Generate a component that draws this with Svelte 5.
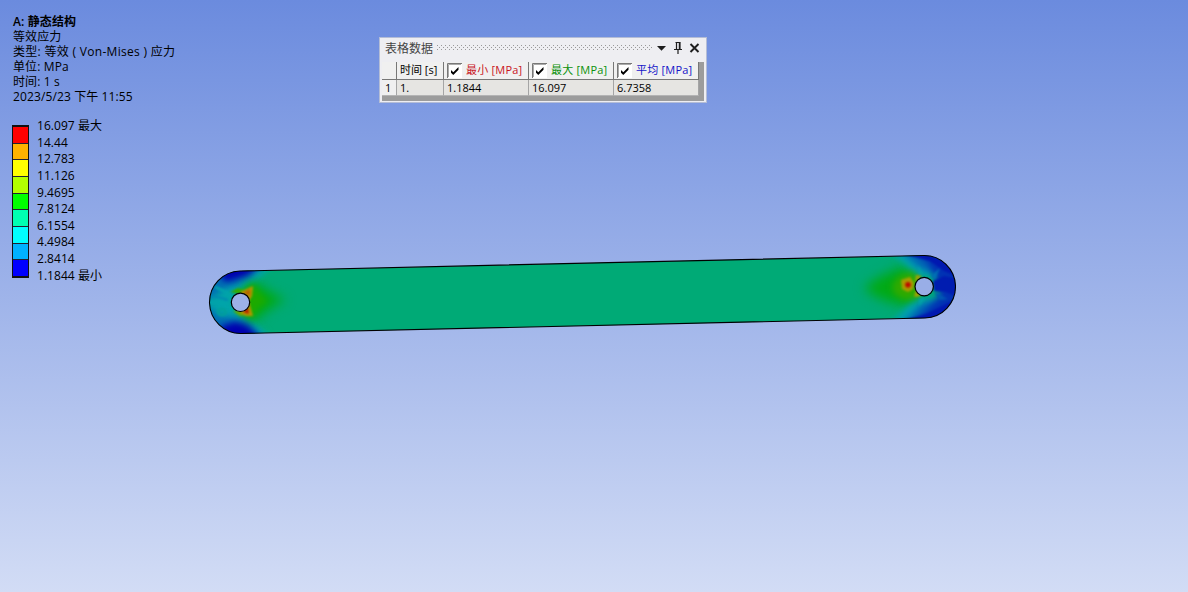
<script>
  const info = [
    { text: 'A: 静态结构', bold: true },
    { text: '等效应力' },
    { text: '类型: 等效 ( Von-Mises ) 应力', wide: true },
    { text: '单位: MPa' },
    { text: '时间: 1 s' },
    { text: '2023/5/23 下午 11:55' }
  ];
  const labels = ['16.097 最大', '14.44', '12.783', '11.126', '9.4695', '7.8124', '6.1554', '4.4984', '2.8414', '1.1844 最小'];
  const bands = ['#ff0000', '#ffb200', '#ffff00', '#b2ff00', '#00ff00', '#00ffb2', '#00ffff', '#00b2ff', '#0000ff'];
  const columns = [
    { name: '最小 [MPa]', color: '#c8141e', value: '1.1844' },
    { name: '最大 [MPa]', color: '#0a910a', value: '16.097' },
    { name: '平均 [MPa]', color: '#1414c8', value: '6.7358' }
  ];
  const outline = 'M240 271 L923.5 255.5 A31.2 31.2 0 0 1 925 318 L241.5 333.5 A31.2 31.2 0 0 1 240 271Z';
</script>

<main class="viewport">
  <section class="info">
    {#each info as line}
      <div class:bold={line.bold} class:wide={line.wide}>{line.text}</div>
    {/each}
  </section>

  <section class="legend">
    <div class="scale">
      {#each bands as band}
        <i style="background:{band}"></i>
      {/each}
    </div>
    <div class="labels">
      {#each labels as label}
        <span>{label}</span>
      {/each}
    </div>
  </section>

  <svg class="model" width="1188" height="592" viewBox="0 0 1188 592">
    <defs>
      <clipPath id="link"><path d={outline} /></clipPath>
      <filter id="b1" color-interpolation-filters="sRGB" x="-60%" y="-60%" width="220%" height="220%"><feGaussianBlur stdDeviation="1.3" /></filter>
      <filter id="b3" color-interpolation-filters="sRGB" x="-60%" y="-60%" width="220%" height="220%"><feGaussianBlur stdDeviation="3" /></filter>
      <filter id="b6" color-interpolation-filters="sRGB" x="-60%" y="-60%" width="220%" height="220%"><feGaussianBlur stdDeviation="6" /></filter>
    </defs>
    <g clip-path="url(#link)">
      <rect x="205" y="250" width="755" height="90" fill="#00aa76" />

      <path d="M200 255 H282 L258 280 L238 291 L232 302 L239 315 L257 325 L280 345 H200Z" fill="#00a4aa" filter="url(#b3)" />
      <g filter="url(#b3)">
        <path d="M200 292 V258 H268 L251 277 L237 285 L226 288 L216 294 L212 298 L202 298Z" fill="#006eb4" />
        <path d="M200 306 L211 308 L218 315 L232 317 L248 320 L268 345 H200Z" fill="#006eb4" />
      </g>
      <g filter="url(#b3)">
        <path d="M220 276 L228 260 H264 L248 275 L236 279 L226 282Z" fill="#0000b0" />
        <path d="M220 343 L221 326 L235 322 L247 325 L264 343Z" fill="#0000b0" />
      </g>
      <g filter="url(#b1)" fill="none" stroke="#00a4aa" stroke-width="2.5">
        <path d="M210 302 H230" />
        <path d="M215 287 L230 294" stroke-width="3" />
        <ellipse cx="222" cy="312" rx="4" ry="3" stroke="#00a09a" />
        <path d="M214 296 L228 300" stroke="#0088b0" stroke-width="2" />
      </g>
      <path d="M246 284 L257 283 Q268 292 286 300 Q267 308 258 319 L246 320Z" fill="#00aa14" filter="url(#b6)" />
      <path d="M242 291 L254 284 L259 292 L268 301 L258 309 L252 319 L242 313Z" fill="#1caa00" filter="url(#b3)" />
      <g filter="url(#b1)">
        <path d="M230 292 L238 288 L247 291 L240 294Z" fill="#32aa00" />
        <path d="M233 311 L240 316 L246 315 L240 310Z" fill="#64a800" />
        <path d="M240 292 L253 286 L252 296 L249 301Z" fill="#b49600" />
        <path d="M243 293 L250 289 L250 296Z" fill="#b46400" />
        <path d="M240 313 L249 302 L253 316 L246 316Z" fill="#b49600" />
        <path d="M243 312 L248 307 L249 314Z" fill="#b41e00" />
      </g>

      <path d="M906 266 Q880 274 864 288 Q878 302 909 306 L918 288Z" fill="#00aa14" filter="url(#b6)" />
      <g filter="url(#b3)">
        <path d="M882 245 L908 266 L920 276 L937 277 L939 297 L922 299 L908 306 L885 329 H968 V245Z" fill="#00a0b0" />
        <path d="M894 245 L920 268 L937 275 L939 298 L921 304 L898 329 H968 V245Z" fill="#0064b4" />
        <path d="M910 245 L928 263 L936 280 L941 294 L929 307 L908 329 H968 V245Z" fill="#0032b4" />
      </g>
      <g filter="url(#b1)">
        <path d="M933 281 L944 276 L960 279 V298 L946 292 L934 291Z" fill="#001cb0" />
        <path d="M900 253 H924 L947 262 L960 278 L944 271 L930 261Z" fill="#0018b0" />
        <path d="M960 297 L940 307 L926 314 L905 320 H934 L954 312Z" fill="#0018b0" />
        <path d="M934 292 L948 299 L940 300Z" fill="#0058b4" />
        <path d="M931 276 L940 268 L935 280Z" fill="#0070b4" />
        <path d="M919 275 L918 265 L924 276Z" fill="#00a0aa" />
        <path d="M919 298 L919 306 L926 298Z" fill="#00a0aa" />
      </g>
      <path d="M899 276 L912 272 L920 279 L918 297 L905 300 L894 294 L892 285Z" fill="#30aa00" filter="url(#b3)" />
      <g filter="url(#b1)">
        <path d="M901 280 L910 277 L914 283 L913 289 L908 292 L902 289Z" fill="#a89c00" />
        <path d="M914 297 L916 290 L921 296Z" fill="#a8a000" />
        <path d="M915 282 L916 275 L922 276Z" fill="#a8a000" />
        <circle cx="908" cy="284.8" r="2.8" fill="#c00800" />
      </g>
    </g>
    <path d={outline} fill="none" stroke="#000" stroke-width="1.1" />
    <circle cx="240.5" cy="302.3" r="9.2" fill="#9db1e8" stroke="#000" stroke-width="1.2" />
    <circle cx="924.2" cy="286.6" r="9.2" fill="#99aee7" stroke="#000" stroke-width="1.2" />
  </svg>

  <section class="panel">
    <header>
      <span class="title">表格数据</span>
      <svg class="grip" width="216" height="6" shape-rendering="crispEdges">
        <defs>
          <pattern id="dots" width="4" height="4" patternUnits="userSpaceOnUse">
            <rect width="1" height="1" fill="#999" /><rect x="2" y="2" width="1" height="1" fill="#999" />
          </pattern>
        </defs>
        <rect width="216" height="5" fill="url(#dots)" />
      </svg>
      <svg class="tools" width="44" height="14" viewBox="0 0 44 14">
        <path d="M1 5h9L5.5 9.7z" fill="#1e1e1e" />
        <path d="M19.5 1.5h5M20.5 1.5v6.5M18 8.5h8M22 9v4" stroke="#1e1e1e" stroke-width="1.2" fill="none" />
        <path d="M23.7 1.5v7" stroke="#1e1e1e" stroke-width="1.8" />
        <path d="M34.5 3l8 8M42.5 3l-8 8" stroke="#1e1e1e" stroke-width="1.9" />
      </svg>
    </header>
    <div class="sheet">
      <div class="grid">
        <div class="cell head"></div>
        <div class="cell head time">时间 [s]</div>
        {#each columns as col}
          <div class="cell head" style="color:{col.color}">
            <svg class="check" width="15" height="15" viewBox="0 0 15 15">
              <path d="M0 0h15v15H0z" fill="#fff" />
              <path d="M.5 15V.5H15" stroke="#777" fill="none" />
              <path d="M1.5 14V1.5H14" stroke="#aaa" fill="none" />
              <path d="M4 7v2.7L6.3 12 11.5 6.8V4L6.3 9.2z" fill="#000" />
            </svg>
            <span>{col.name}</span>
          </div>
        {/each}
        <div class="cell rownum">1</div>
        <div class="cell">1.</div>
        {#each columns as col}
          <div class="cell">{col.value}</div>
        {/each}
      </div>
    </div>
  </section>
</main>

<style>
  :global(body) { margin: 0; }
  .viewport {
    position: relative;
    width: 1188px;
    height: 592px;
    overflow: hidden;
    background: linear-gradient(#6b8bde, #d2dcf5);
    color: #000;
    font: 12px/15px "Open Sans", "Noto Sans CJK SC", sans-serif;
    white-space: nowrap;
  }
  .info { padding: 14px 0 0 13px; }
  .info div { height: 15px; letter-spacing: 0.12px; }
  .info .bold { font-weight: 600; }
  .info .wide { letter-spacing: 0.3px; }
  .legend { display: flex; gap: 8px; padding: 14px 0 0 12px; }
  .scale {
    display: flex;
    flex-direction: column;
    box-sizing: border-box;
    width: 17px;
    height: 153px;
    margin-top: 7px;
    border: solid #111;
    border-width: 2px 1.5px;
  }
  .scale i { flex: 1; border-top: 1px solid #223; }
  .scale i:first-child { border-top: 0; }
  .labels { display: flex; flex-direction: column; letter-spacing: 0.05px; }
  .labels span { height: 16.65px; }
  .model { position: absolute; left: 0; top: 0; }
  .panel {
    position: absolute;
    left: 379px;
    top: 37px;
    box-sizing: border-box;
    width: 328px;
    height: 66px;
    padding: 0 2px;
    border: 1px solid #b4bdd6;
    background: #eeeef2;
  }
  header { display: flex; align-items: center; height: 20px; padding-left: 3px; }
  .title { width: 51px; color: #444; }
  .grip { margin-left: 1px; }
  .tools { margin-left: 3px; }
  .sheet { height: 39px; margin-top: 4px; background: #9c9c9c; }
  .grid {
    display: grid;
    grid-template-columns: 15px 47px 85px 85px 85px;
    grid-template-rows: 18px 16px;
    width: 317px;
    font-size: 11px;
  }
  .cell {
    display: flex;
    align-items: center;
    box-sizing: border-box;
    padding-left: 3px;
    border-right: 1px solid #a5a5a5;
    border-bottom: 1px solid #b4b4b4;
    background: #e6e5e2;
  }
  .head { padding-bottom: 2px; border-color: #777; background: #f0f0f0; }
  .head span { letter-spacing: 0.22px; }
  .rownum { background: #f0f0f0; }
  .check { flex: none; margin: 1px 4px 0 0; }
</style>
